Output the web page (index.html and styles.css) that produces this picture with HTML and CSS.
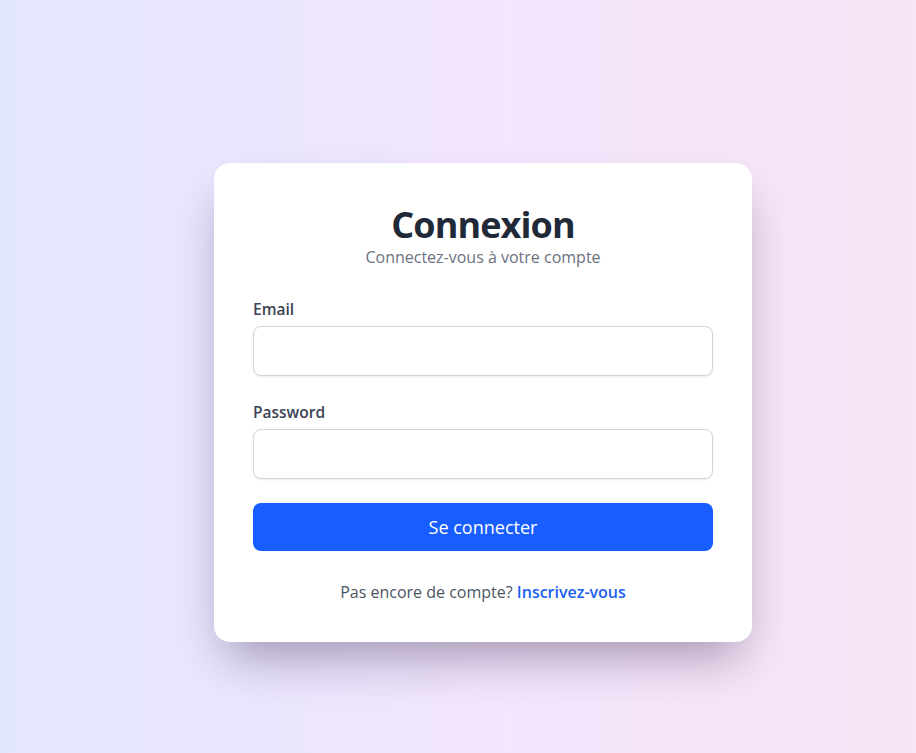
FILE: index.html
```html
<!DOCTYPE html>
<html lang="fr">
<head>
<meta charset="utf-8">
<title>Connexion</title>
<link rel="stylesheet" href="styles.css">
</head>
<body>
<main class="page">
  <section class="card">
    <header class="card-header">
      <h1 class="title">Connexion</h1>
      <p class="subtitle">Connectez-vous à votre compte</p>
    </header>
    <form class="form">
      <div class="field">
        <label class="label" for="email">Email</label>
        <input class="input" id="email" type="email">
      </div>
      <div class="field">
        <label class="label" for="password">Password</label>
        <input class="input" id="password" type="password">
      </div>
      <button class="button" type="button">Se connecter</button>
    </form>
    <p class="footer">Pas encore de compte? <a class="link" href="#">Inscrivez-vous</a></p>
  </section>
</main>
</body>
</html>
```
FILE: styles.css
```css
* { box-sizing: border-box; }
html, body { margin: 0; padding: 0; }
body {
  font-family: "Open Sans", "Noto Sans", sans-serif;
  background: linear-gradient(to right, #e3e7fe, #f3e6fd 55%, #f8e5f6);
  min-height: 753px;
}
.page {
  min-height: 753px;
  display: flex;
  justify-content: center;
  align-items: flex-start;
  padding: 163px 0 0 50px;
}
.card {
  width: 538px;
  background: #fff;
  border-radius: 16px;
  padding: 42px 39px 38px;
  box-shadow: 0 25px 50px -12px rgba(40, 20, 60, 0.4);
}
.card-header { text-align: center; margin-bottom: 28px; }
.title {
  margin: 0;
  font-size: 36px;
  line-height: 40px;
  font-weight: 700;
  color: #1f2937;
  letter-spacing: -0.9px;
}
.subtitle {
  margin: 0;
  font-size: 16px;
  line-height: 24px;
  color: #6b7280;
}
.form { display: flex; flex-direction: column; }
.field { display: flex; flex-direction: column; margin-bottom: 24px; }
.label {
  font-size: 15.5px;
  line-height: 24px;
  font-weight: 600;
  color: #3b4353;
  margin-bottom: 5px;
}
.input {
  height: 50px;
  border: 1px solid #d1d5db;
  border-radius: 8px;
  box-shadow: 0 1px 2px rgba(0, 0, 0, 0.08);
  padding: 12px 16px;
  font: inherit;
  background: #fff;
}
.button {
  height: 48px;
  border: none;
  border-radius: 8px;
  background: #175dff;
  color: #fff;
  font-family: inherit;
  font-size: 18px;
  line-height: 24px;
  cursor: pointer;
}
.footer {
  margin: 29px 0 0;
  text-align: center;
  font-size: 16px;
  line-height: 24px;
  color: #4b5563;
}
.link {
  color: #1a5ff0;
  font-weight: 600;
  text-decoration: none;
}
```
